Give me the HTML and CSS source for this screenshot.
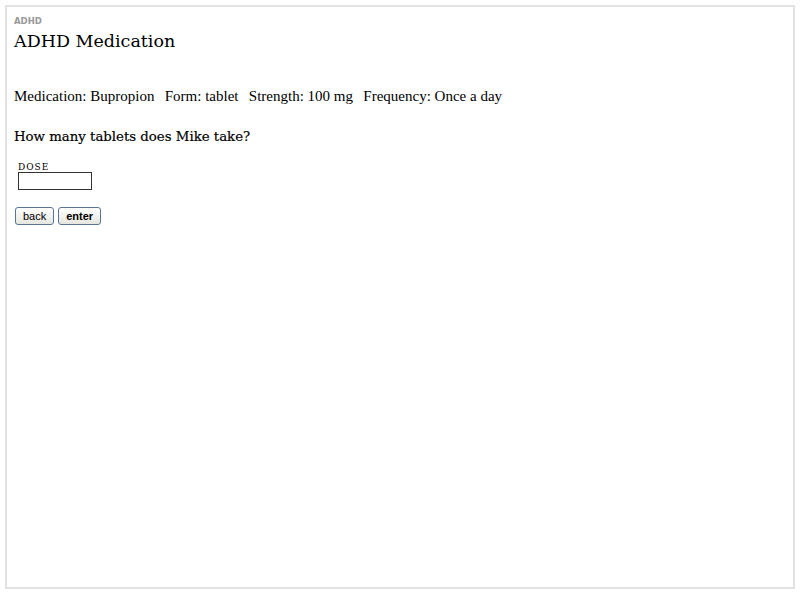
FILE: index.html
```html
<!DOCTYPE html>
<html>
<head>
<meta charset="utf-8">
<link rel="stylesheet" href="styles.css">
</head>
<body>
<div class="frame">
  <div class="crumb">ADHD</div>
  <h1 class="title">ADHD Medication</h1>
  <p class="details">Medication: Bupropion <span class="gap"></span>Form: tablet <span class="gap"></span>Strength: 100 mg <span class="gap"></span>Frequency: Once a day</p>
  <h2 class="question">How many tablets does Mike take?</h2>
  <div class="field">
    <label class="label" for="dose">DOSE</label>
    <input class="input" id="dose" type="text">
  </div>
  <div class="actions">
    <button class="btn">back</button>
    <button class="btn btn-bold">enter</button>
  </div>
</div>
</body>
</html>
```
FILE: styles.css
```css
html, body {
  margin: 0;
  padding: 0;
  background: #fff;
}
body {
  padding: 5px 5px 6px 5px;
}
.frame {
  box-sizing: border-box;
  height: 584px;
  border: 2px solid #e2e2e2;
  padding: 9px 7px;
  font-family: "Liberation Serif", serif;
  color: #000;
}
.crumb {
  font-family: "DejaVu Sans", sans-serif;
  font-weight: bold;
  font-size: 8.5px;
  color: #999;
  line-height: 10px;
}
.title {
  margin: 3px 0 0 0;
  font-family: "DejaVu Serif", serif;
  font-weight: normal;
  font-size: 17.5px;
  line-height: 24px;
}
.details {
  margin: 34px 0 0 0;
  font-size: 15px;
  line-height: 18px;
}
.gap {
  display: inline-block;
  width: 6.6px;
}
.question {
  margin: 23px 0 0 0;
  font-family: "DejaVu Serif", serif;
  font-weight: normal;
  font-size: 13.3px;
  line-height: 18px;
  -webkit-text-stroke: 0.2px #000;
}
.field {
  margin: 16px 0 0 4px;
  display: flex;
  flex-direction: column;
  align-items: flex-start;
}
.label {
  font-family: "DejaVu Serif", serif;
  font-size: 9px;
  letter-spacing: 1px;
  line-height: 10px;
}
.input {
  box-sizing: border-box;
  width: 74px;
  height: 18px;
  margin: 0;
  border: 1px solid #333;
  padding: 0 2px;
}
.actions {
  margin: 17px 0 0 1px;
  display: flex;
  gap: 4px;
}
.btn {
  box-sizing: border-box;
  height: 18px;
  padding: 0 7px;
  border: 1px solid #5a7597;
  border-radius: 3px;
  background: linear-gradient(#fff, #e6e6e0);
  font-family: "Liberation Sans", sans-serif;
  font-size: 11px;
  color: #000;
}
.btn-bold {
  font-weight: bold;
}
```
